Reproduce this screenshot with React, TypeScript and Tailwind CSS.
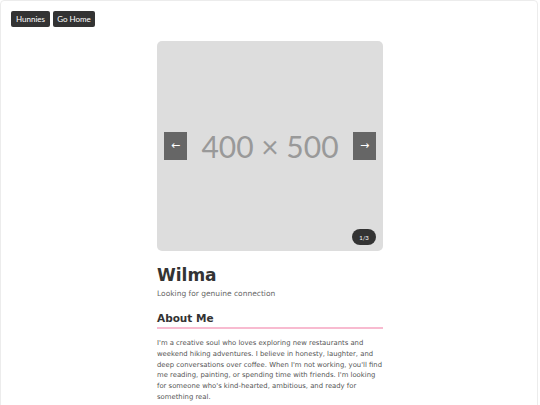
import React from "react";

const sans = { fontFamily: '"DejaVu Sans", Verdana, sans-serif' };
const ui = { fontFamily: 'Lato, "Open Sans", Arial, sans-serif' };

export default function App() {
  return (
    <div className="w-[540px] h-[405px] bg-white overflow-hidden">
      <div className="w-[538px] h-[420px] border border-[#ececec] rounded-[4px] bg-white">
        <div className="flex gap-[3px] pl-[10px] pt-[10px]" style={ui}>
          <button className="h-[16px] w-[39px] rounded-[2px] bg-[#333] text-white text-[8px] leading-none">
            Hunnies
          </button>
          <button className="h-[16px] w-[42px] rounded-[2px] bg-[#333] text-white text-[8px] leading-none">
            Go Home
          </button>
        </div>

        <div className="w-[226px] ml-[156px] mt-[14px]" style={sans}>
          <div className="relative h-[210px] rounded-[5px] bg-[#dddddd] flex items-center justify-center">
            <span className="text-[#999] text-[30px] leading-none" style={ui}>
              400 × 500
            </span>
            <button className="absolute left-[7px] top-[91px] w-[23px] h-[28px] bg-[#666] text-white text-[11px] flex items-center justify-center">
              ←
            </button>
            <button className="absolute right-[7px] top-[91px] w-[23px] h-[28px] bg-[#666] text-white text-[11px] flex items-center justify-center">
              →
            </button>
            <span
              className="absolute right-[7px] bottom-[6px] w-[24px] h-[16px] rounded-full bg-[#333] text-white text-[6px] flex items-center justify-center"
              style={ui}
            >
              1/3
            </span>
          </div>

          <h1 className="mt-[13px] text-[17px] font-bold text-[#333] leading-[22px]">Wilma</h1>
          <p className="mt-[2px] text-[7.5px] text-[#666] leading-[12px]">Looking for genuine connection</p>

          <h2 className="mt-[11px] text-[10.5px] font-bold text-[#333] leading-[14px] pb-[2px] border-b-2 border-[#f8bbd0]">
            About Me
          </h2>
          <p className="mt-[9px] mr-[-3px] text-[6.85px] text-[#555] leading-[10.8px]">
            I'm a creative soul who loves exploring new restaurants and weekend hiking adventures. I believe in
            honesty, laughter, and deep conversations over coffee. When I'm not working, you'll find me reading,
            painting, or spending time with friends. I'm looking for someone who's kind-hearted, ambitious, and ready
            for something real.
          </p>
        </div>
      </div>
    </div>
  );
}
